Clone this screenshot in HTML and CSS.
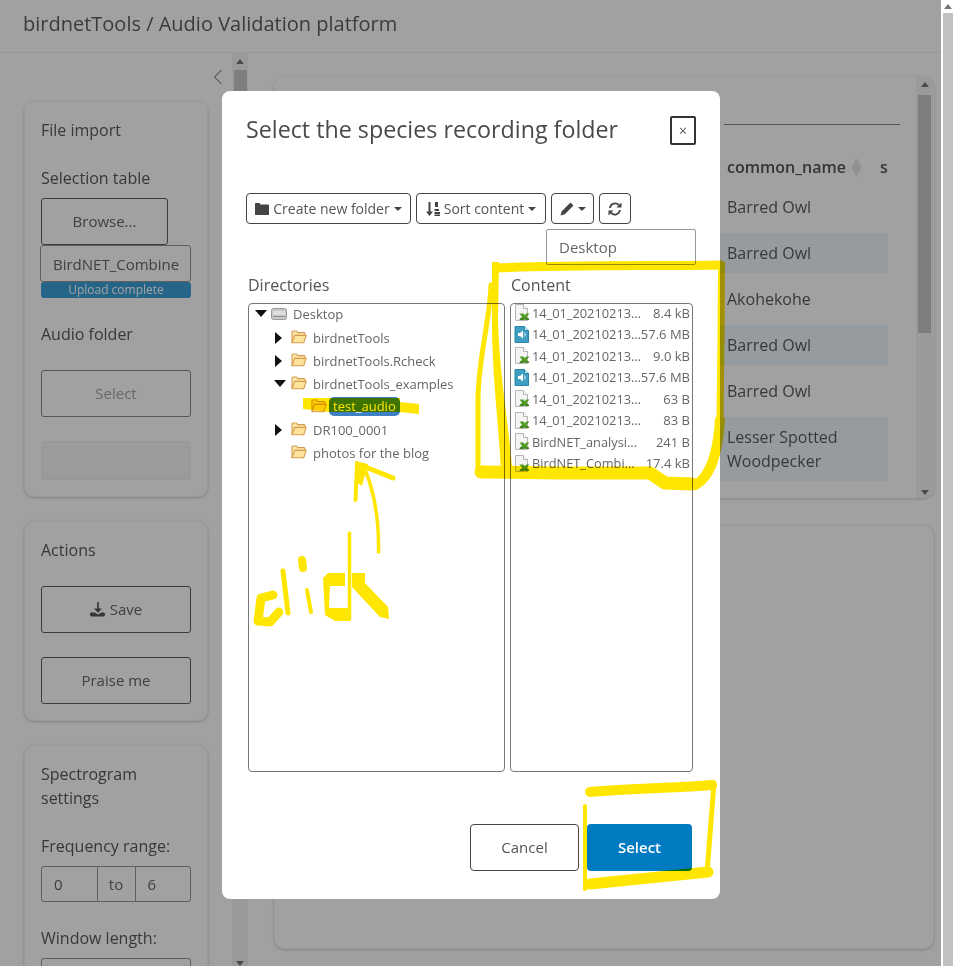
FILE: index.html
```html
<!DOCTYPE html>
<html lang="en">
<head>
<meta charset="utf-8">
<title>birdnetTools / Audio Validation platform</title>
<link rel="stylesheet" href="styles.css">
</head>
<body>
<svg class="defs" width="0" height="0" aria-hidden="true">
  <defs>
    <symbol id="folder" viewBox="0 0 16 14">
      <path d="M1 12.5V2.2C1 1.5 1.4 1 2 1h3.4l1.4 1.6H13c.6 0 1 .4 1 1V5" fill="#fbe6a8" stroke="#d69a4e" stroke-width="1.1"/>
      <path d="M1 12.7 3.6 5.4h11.6l-2.4 7.3z" fill="#ffe39a" stroke="#d69a4e" stroke-width="1.1" stroke-linejoin="round"/>
    </symbol>
    <symbol id="xls" viewBox="0 0 16 17">
      <path d="M1.5.5h8l4 4v11.9h-12z" fill="#f4f4f4" stroke="#b5b5b5"/>
      <path d="M9.5.5v4h4" fill="#fff" stroke="#b5b5b5"/>
      <path d="M5.5 9.5h4l1.3 1.900 1.300-1.900h3.400l-3 3.200 3 3.300h-3.600l-1.300-1.800-1.300 1.800H5l3.100-3.300z" fill="#4e9a1f"/>
      <path d="M6 15h9" stroke="#2e7410" stroke-width="1"/>
    </symbol>
    <symbol id="audio" viewBox="0 0 16 17">
      <path d="M1 .5h9.500l4 4v12H1z" fill="#3f9fc0" stroke="#2b86a8"/>
      <path d="M10.500.5v4h4" fill="#d7eef6" stroke="#2b86a8"/>
      <path d="M4 7h2l3-2.600v8.200L6 10H4z" fill="#fff"/>
      <path d="M10.400 6.500c1 1.200 1 2.800 0 4" fill="none" stroke="#fff"/>
    </symbol>
  </defs>
</svg>

<div class="window">
  <div class="app">
    <header class="topbar">birdnetTools / Audio Validation platform</header>
    <div class="content">
      <aside class="sidebar">
        <div class="collapse"><svg width="10" height="16" viewBox="0 0 10 16"><path d="M8.500 1 1.500 8l7 7" fill="none" stroke="#555" stroke-width="1"/></svg></div>
        <section class="card first-card">
          <h3 class="card-title">File import</h3>
          <div class="label label-selection">Selection table</div>
          <div class="btn btn-browse">Browse...</div>
          <div class="file-name">BirdNET_Combine</div>
          <div class="progress">Upload complete</div>
          <div class="label label-audio">Audio folder</div>
          <div class="btn btn-wide btn-disabled">Select</div>
          <div class="disabled-input"></div>
        </section>
        <section class="card actions-card">
          <h3 class="card-title">Actions</h3>
          <div class="btn btn-wide btn-save">
            <svg width="16" height="16" viewBox="0 0 16 16"><path d="M7.200 1h1.600v6.500H12L8 11.800 4 7.500h3.200z" fill="#555"/><path d="M1.500 11.500h3L8 13.500l3.500-2h2c.8 0 1.500.7 1.500 1.800s-.7 2.200-1.500 2.200h-12C.7 15.500 0 14.500 0 13.300s.7-1.800 1.500-1.800z" fill="#555"/></svg>
            Save
          </div>
          <div class="btn btn-wide btn-praise">Praise me</div>
        </section>
        <section class="card spectro-card">
          <h3 class="card-title">Spectrogram settings</h3>
          <div class="label label-freq">Frequency range:</div>
          <div class="range"><span class="range-val">0</span><span class="range-to">to</span><span class="range-val">6</span></div>
          <div class="label label-window">Window length:</div>
          <div class="win-input"></div>
        </section>
      </aside>
      <div class="side-scroll">
        <span class="arrow-up"></span>
        <span class="side-thumb"></span>
        <span class="arrow-down"></span>
      </div>
      <main class="main">
        <section class="main-card">
          <div class="table-area">
            <div class="rule"></div>
            <div class="thead"><span class="th-name">common_name</span>
              <svg class="sort" width="11" height="19" viewBox="0 0 11 19"><path d="M5.500 0 10.500 9.500 5.500 19 .5 9.500z" fill="#e6e6e6"/></svg>
              <span class="th-s">s</span></div>
            <div class="row">Barred Owl</div>
            <div class="row striped">Barred Owl</div>
            <div class="row">Akohekohe</div>
            <div class="row striped">Barred Owl</div>
            <div class="row">Barred Owl</div>
            <div class="row striped">Lesser Spotted<br>Woodpecker</div>
            <div class="row">Barred Owl</div>
          </div>
          <div class="table-scroll">
            <span class="arrow-up"></span>
            <span class="table-thumb"></span>
            <span class="arrow-down"></span>
          </div>
        </section>
        <section class="lower-card"></section>
      </main>
    </div>
    <div class="backdrop"></div>

    <div class="modal">
      <div class="modal-head">
        <h2 class="modal-title">Select the species recording folder</h2>
        <div class="close">×</div>
      </div>
      <div class="toolbar">
        <div class="tool tool-create">
          <svg width="14" height="13" viewBox="0 0 14 13"><path d="M0 2c0-.6.4-1 1-1h3.500l1 1.500H13c.6 0 1 .4 1 1V12c0 .6-.4 1-1 1H1c-.6 0-1-.4-1-1z" fill="#444"/></svg>
          Create new folder<span class="caret"></span>
        </div>
        <div class="tool tool-sort">
          <svg width="14" height="14" viewBox="0 0 14 14"><path d="M2.500 0h2v9.500H7L3.500 14 0 9.500h2.500z" fill="#444"/><path d="M9 0h3v5H9zM8.500 7H13v2H8.500zM8.500 10H14v2H8.500zM8.500 12.500H14V14H8.500z" fill="#444"/></svg>
          Sort content<span class="caret"></span>
        </div>
        <div class="tool tool-edit">
          <svg width="14" height="14" viewBox="0 0 14 14"><path d="M10.500.5 13.500 3.500 4.800 12.200.5 13.500 1.800 9.200z" fill="#444"/></svg>
          <span class="caret"></span>
        </div>
        <div class="tool tool-refresh">
          <svg width="14" height="14" viewBox="0 0 14 14"><path d="M2 6A5.200 5.200 0 0 1 11 3.200" fill="none" stroke="#444" stroke-width="1.800"/><path d="M13.500.5v5h-5z" fill="#444"/><path d="M12 8A5.200 5.200 0 0 1 3 10.800" fill="none" stroke="#444" stroke-width="1.800"/><path d="M.5 13.500v-5h5z" fill="#444"/></svg>
        </div>
      </div>
      <div class="path-box">Desktop</div>
      <div class="pane-labels"><span class="pane-dir">Directories</span><span class="pane-con">Content</span></div>
      <div class="panes">
        <div class="tree">
          <div class="tree-row lvl0"><span class="tri tri-down"></span>
            <svg class="drive" width="16" height="12" viewBox="0 0 16 12"><rect x=".5" y=".5" width="15" height="11" rx="2" fill="#c9c9c9" stroke="#999"/><path d="M2 4h12M2 6h12" stroke="#f2f2f2"/><path d="M2 8.500h12" stroke="#8d8d8d"/></svg>
            <span>Desktop</span></div>
          <div class="tree-row lvl1"><span class="tri tri-right"></span><svg class="fold"><use href="#folder"/></svg><span>birdnetTools</span></div>
          <div class="tree-row lvl1"><span class="tri tri-right"></span><svg class="fold"><use href="#folder"/></svg><span>birdnetTools.Rcheck</span></div>
          <div class="tree-row lvl1"><span class="tri tri-down small"></span><svg class="fold"><use href="#folder"/></svg><span>birdnetTools_examples</span></div>
          <div class="tree-row lvl2"><svg class="fold"><use href="#folder"/></svg><span class="selected">test_audio</span></div>
          <div class="tree-row lvl1"><span class="tri tri-right"></span><svg class="fold"><use href="#folder"/></svg><span>DR100_0001</span></div>
          <div class="tree-row lvl1"><span class="tri tri-none"></span><svg class="fold"><use href="#folder"/></svg><span>photos for the blog</span></div>
        </div>
        <div class="files">
          <div class="file"><svg class="ficon"><use href="#xls"/></svg><span class="fname">14_01_20210213_BirdNET.selection.txt</span><span class="fsize">8.4 kB</span></div>
          <div class="file"><svg class="ficon"><use href="#audio"/></svg><span class="fname">14_01_20210213_141500_recording.wav</span><span class="fsize">57.6 MB</span></div>
          <div class="file"><svg class="ficon"><use href="#xls"/></svg><span class="fname">14_01_20210213_BirdNET.results.csv</span><span class="fsize">9.0 kB</span></div>
          <div class="file"><svg class="ficon"><use href="#audio"/></svg><span class="fname">14_01_20210213_151500_recording.wav</span><span class="fsize">57.6 MB</span></div>
          <div class="file"><svg class="ficon"><use href="#xls"/></svg><span class="fname">14_01_20210213_141500_check.csv</span><span class="fsize">63 B</span></div>
          <div class="file"><svg class="ficon"><use href="#xls"/></svg><span class="fname">14_01_20210213_151500_check.csv</span><span class="fsize">83 B</span></div>
          <div class="file"><svg class="ficon"><use href="#xls"/></svg><span class="fname fname-short">BirdNET_analysis_params.csv</span><span class="fsize">241 B</span></div>
          <div class="file"><svg class="ficon"><use href="#xls"/></svg><span class="fname fname-short">BirdNET_CombinedTable.csv</span><span class="fsize">17.4 kB</span></div>
        </div>
      </div>
      <div class="modal-foot">
        <div class="foot-btn cancel">Cancel</div>
        <div class="foot-btn confirm">Select</div>
      </div>
    </div>

    <svg class="ink" width="941" height="966" viewBox="0 0 941 966" aria-hidden="true">
      <g fill="none" stroke="#ffe600" stroke-linecap="round" stroke-linejoin="round">
        <path d="M497 268C560 265 660 266 721 265" stroke-width="9"/>
        <path d="M721.500 265 721 340 720 420" stroke-width="7"/>
        <path d="M720 420C718 450 712 476 695 485" stroke-width="10"/>
        <path d="M481 472 560 473 650 473 665 483 692 484" stroke-width="13"/>
        <path d="M491 285C490 320 478 360 478 400L478 470" stroke-width="5"/>
        <!-- select scribble -->
        <path d="M590 792C630 788 680 788 712 785" stroke-width="10"/>
        <path d="M714 783 707 873" stroke-width="5"/>
        <path d="M708 872 590 884" stroke-width="11"/>
        <path d="M585 806V889" stroke-width="4"/>
        <!-- click -->
        <path d="M273 595 261 598 258 621 270 622 279 612" stroke-width="9"/>
        <path d="M283 571 288 613" stroke-width="5"/>
        <path d="M302 560 303 568" stroke-width="8"/>
        <path d="M307 590 311 612" stroke-width="4"/>
        <path d="M349.500 533V619" stroke-width="3.500"/>
        <!-- arrow -->
        <path d="M378.500 552C379 525 375 495 366 472" stroke-width="3.500"/>
        <path d="M355.500 500 357 465" stroke-width="4"/>
        <path d="M358 464 393 478" stroke-width="5"/>
      </g>
      <g fill="#ffe600">
        <path d="M492 262H499L498 320C499 370 508 420 512 466L501 470C498 420 492 370 492 325z"/>
        <path d="M303 398H400V402L419 404V414L400 412H329L303 409z"/>
        <path d="M355 461 368 464 362 486 355 481z"/>
        <path d="M323 578 328 573H345V586H330L329 608H349L350 621H335L325 615z"/>
        <path d="M352 573H365V583L388 607 389 619 380 617 352 587z"/>
      </g>
    </svg>
  </div>
  <div class="win-scroll">
    <span class="arrow-up"></span>
    <span class="win-thumb"></span>
  </div>
</div>
</body>
</html>
```

FILE: styles.css
```css
* { box-sizing: border-box; }
html, body { margin: 0; padding: 0; height: 100%; overflow: hidden; background: #fff; }
body { font-family: "Open Sans", "Liberation Sans", sans-serif; font-size: 16px; line-height: 24px; color: #5a5a5a; }
.defs { position: absolute; }

.window { display: flex; height: 966px; width: 953px; }
.app { position: relative; width: 941px; height: 966px; overflow: hidden; background: #fff; flex: none; }

.topbar { height: 53px; padding: 12px 23px 0; font-size: 20px; line-height: 24px; border-bottom: 1px solid #f0f0f0; color: #5f5f5f; }
.content { display: flex; height: 913px; }

.sidebar { width: 232px; flex: none; padding: 0 24px; overflow: hidden; position: relative; }
.collapse { position: absolute; top: 16px; left: 213px; width: 10px; height: 16px; line-height: 0; }

.card { width: 184px; background: #fff; border-radius: 10px; padding: 17px; box-shadow: 0 1px 3px rgba(0,0,0,.2); border: 1px solid #f4f4f4; }
.first-card { margin-top: 48px; height: 396px; padding-top: 16px; }
.actions-card { margin-top: 24px; height: 200px; padding-top: 16px; }
.spectro-card { margin-top: 24px; height: 260px; padding-top: 16px; }
.card-title { margin: 0; font-size: 16px; font-weight: 400; line-height: 24px; }
.card > * { margin-left: -1px; }
.card .card-title, .card .label { margin-left: -1px; }

.label { line-height: 24px; }
.label-selection { margin-top: 24px; }
.label-audio { margin-top: 24px; }
.label-freq { margin-top: 24px; }
.label-window { margin-top: 24px; }

.btn { border: 1px solid #5f5f5f; border-radius: 3px; height: 47px; padding-bottom: 2px; display: flex; align-items: center; justify-content: center; gap: 4px; font-size: 15px; color: #666; background: #fff; }
.btn-browse { width: 127px; margin-top: 8px; }
.file-name { width: 151px; height: 37px; border: 1px solid #999; border-radius: 3px; margin-left: -2px; padding: 6px 0 0 12px; font-size: 15px; color: #666; white-space: nowrap; overflow: hidden; }
.progress { width: 150px; height: 16px; background: #3aa0d8; border-radius: 3px; color: #fff; font-size: 12px; line-height: 16px; text-align: center; }
.btn-wide { width: 150px; }
.btn-disabled { margin-top: 24px; color: #a5a5a5; border-color: #8c8c8c; }
.disabled-input { width: 150px; height: 39px; margin-top: 24px; background: #f6f6f6; border: 1px solid #eee; border-radius: 3px; }
.btn-save { margin-top: 24px; }
.btn-praise { margin-top: 24px; }

.range { display: flex; width: 150px; height: 36px; margin-top: 8px; border: 1px solid #969696; border-radius: 3px; font-size: 15px; line-height: 34px; color: #666; }
.range-val { flex: 1; padding-left: 12px; }
.range-to { width: 39px; flex: none; text-align: center; border-left: 1px solid #969696; border-right: 1px solid #969696; }
.win-input { width: 150px; height: 36px; margin-top: 8px; border: 1px solid #969696; border-radius: 3px; }

.side-scroll { width: 16px; flex: none; background: #f4f4f4; position: relative; display: flex; flex-direction: column; align-items: center; }
.side-thumb { width: 13px; height: 400px; background: #c8c8c8; position: absolute; top: 17px; left: 2px; }

.arrow-up { position: absolute; top: 6px; left: 50%; margin-left: -4px; border: 4px solid transparent; border-top: 0; border-bottom: 5px solid #777; }
.arrow-down { position: absolute; bottom: 0; left: 50%; margin-left: -4px; border: 4px solid transparent; border-bottom: 0; border-top: 5px solid #777; }

.main { flex: 1; padding: 23px 7px 0 26px; min-width: 0; }
.main-card { position: relative; height: 422px; border-radius: 10px; background: #fff; box-shadow: 0 1px 3px rgba(0,0,0,.2); overflow: hidden; padding-left: 446px; }
.lower-card { height: 424px; margin-top: 27px; border-radius: 10px; background: #fff; border: 1px solid #f4f4f4; box-shadow: 0 1px 3px rgba(0,0,0,.2); }

.table-area { width: 180px; padding-top: 48px; }
.rule { width: 176px; margin-left: 4px; border-top: 1px solid #555; position: relative; z-index: 1; }
.thead { display: flex; align-items: center; height: 59px; padding: 25px 0 0 7px; font-weight: 600; font-size: 16px; white-space: nowrap; color: #555; }
.th-name { width: 124px; flex: none; }
.sort { flex: none; margin-left: 0; }
.th-s { margin-left: 18px; }
.row { width: 168px; padding: 8px 0 8px 7px; line-height: 24px; font-size: 16px; border-top: 3px solid transparent; border-bottom: 3px solid transparent; background-clip: padding-box; }
.striped { background-color: #edf6fb; }

.table-scroll { position: absolute; top: 0; bottom: 0; right: 1px; width: 17px; background: #f4f4f4; }
.table-thumb { position: absolute; top: 19px; left: 2px; width: 13px; height: 238px; background: #c8c8c8; }
.table-scroll .arrow-down { bottom: 3px; }

.backdrop { position: absolute; inset: 0; background: rgba(0,0,0,.37); }

.modal { position: absolute; top: 91px; left: 222px; width: 498px; height: 808px; background: #fff; border-radius: 8px; color: #555; }
.modal-head { display: flex; justify-content: space-between; align-items: flex-start; height: 102px; padding: 25px 24px 0; }
.modal-title { margin: -1px 0 0; font-size: 23.250px; font-weight: 400; line-height: 29px; color: #4a4a4a; }
.close { width: 26px; height: 29px; border: 2px solid #333; border-radius: 2px; text-align: center; font-size: 14px; line-height: 25px; color: #555; }

.toolbar { display: flex; gap: 5px; padding-left: 24px; }
.tool { display: flex; align-items: center; justify-content: center; gap: 4px; height: 31px; border: 1px solid #444; border-radius: 4px; font-size: 14px; color: #555; white-space: nowrap; }
.tool-create { width: 165px; }
.tool-sort { width: 130px; }
.tool-edit { width: 43px; }
.tool-refresh { width: 32px; }
.caret { display: inline-block; border: 4px solid transparent; border-bottom: 0; border-top: 4px solid #444; margin-left: 0; }

.path-box { width: 150px; height: 36px; margin: 5px 24px 0 auto; border: 1px solid #999; border-radius: 2px; padding: 5px 0 0 12px; font-size: 15px; color: #666; }
.pane-labels { display: flex; margin-top: 8px; padding-left: 26px; height: 30px; line-height: 24px; font-size: 16px; }
.pane-dir { width: 263px; }
.panes { display: flex; gap: 5px; padding-left: 26px; }
.tree { width: 257px; height: 469px; border: 1px solid #777; border-radius: 4px; padding-top: 0; font-size: 13px; }
.files { width: 183px; height: 469px; border: 1px solid #777; border-radius: 4px; font-size: 13px; color: #666; }

.tree-row { display: flex; align-items: center; height: 23px; white-space: nowrap; color: #666; position: relative; top: -1px; }
.lvl0 { padding-left: 6px; position: relative; top: -2px; }
.lvl1 { padding-left: 25px; }
.lvl2 { padding-left: 62px; }
.tri { display: inline-block; width: 0; height: 0; flex: none; }
.tri-down { border: 6px solid transparent; border-bottom: 0; border-top: 7px solid #111; margin-right: 4px; }
.lvl1 .tri-right { margin-left: 1px; }
.lvl1 .tri-none { margin-left: 1px; }
.lvl1 .tri-down { margin-left: 0; margin-right: 5px; }
.tri-right { border: 6px solid transparent; border-right: 0; border-left: 7px solid #111; margin-right: 9px; }
.tri-none { width: 16px; }
.drive { margin-right: 6px; flex: none; }
.fold { width: 16px; height: 14px; margin-right: 6px; flex: none; position: relative; top: -1px; }
.lvl2 .fold { margin-right: 1px; }
.selected { background: #3f7fc4; color: #fff; border-radius: 5px; padding: 0 4px; height: 19px; line-height: 18px; width: 71px; margin-left: 1px; }

.file { display: flex; align-items: center; height: 21.500px; padding: 0 2px 0 3px; white-space: nowrap; position: relative; top: -2px; }
.ficon { width: 16px; height: 17px; flex: none; margin-right: 2px; }
.fname { width: 111px; flex: none; overflow: hidden; text-overflow: ellipsis; font-size: 12.800px; }
.fname-short { width: 108px; }
.fsize { flex: 1; margin-left: -5px; text-align: right; white-space: nowrap; }

.modal-foot { display: flex; justify-content: flex-end; gap: 8px; padding-right: 28px; margin-top: 52px; }
.foot-btn { height: 47px; padding-bottom: 2px; display: flex; align-items: center; justify-content: center; border-radius: 4px; font-size: 15px; }
.cancel { width: 109px; border: 1px solid #444; color: #555; }
.confirm { width: 105px; background: #007bc2; color: #fff; font-weight: 600; }

.ink { position: absolute; left: 0; top: 0; mix-blend-mode: multiply; pointer-events: none; }

.win-scroll { position: relative; width: 12px; flex: none; background: #fff; }
.win-thumb { position: absolute; top: 13px; left: 2px; width: 10px; height: 953px; background: #c1c1c1; }
.win-scroll .arrow-up { top: 4px; margin-left: -3px; }
```
